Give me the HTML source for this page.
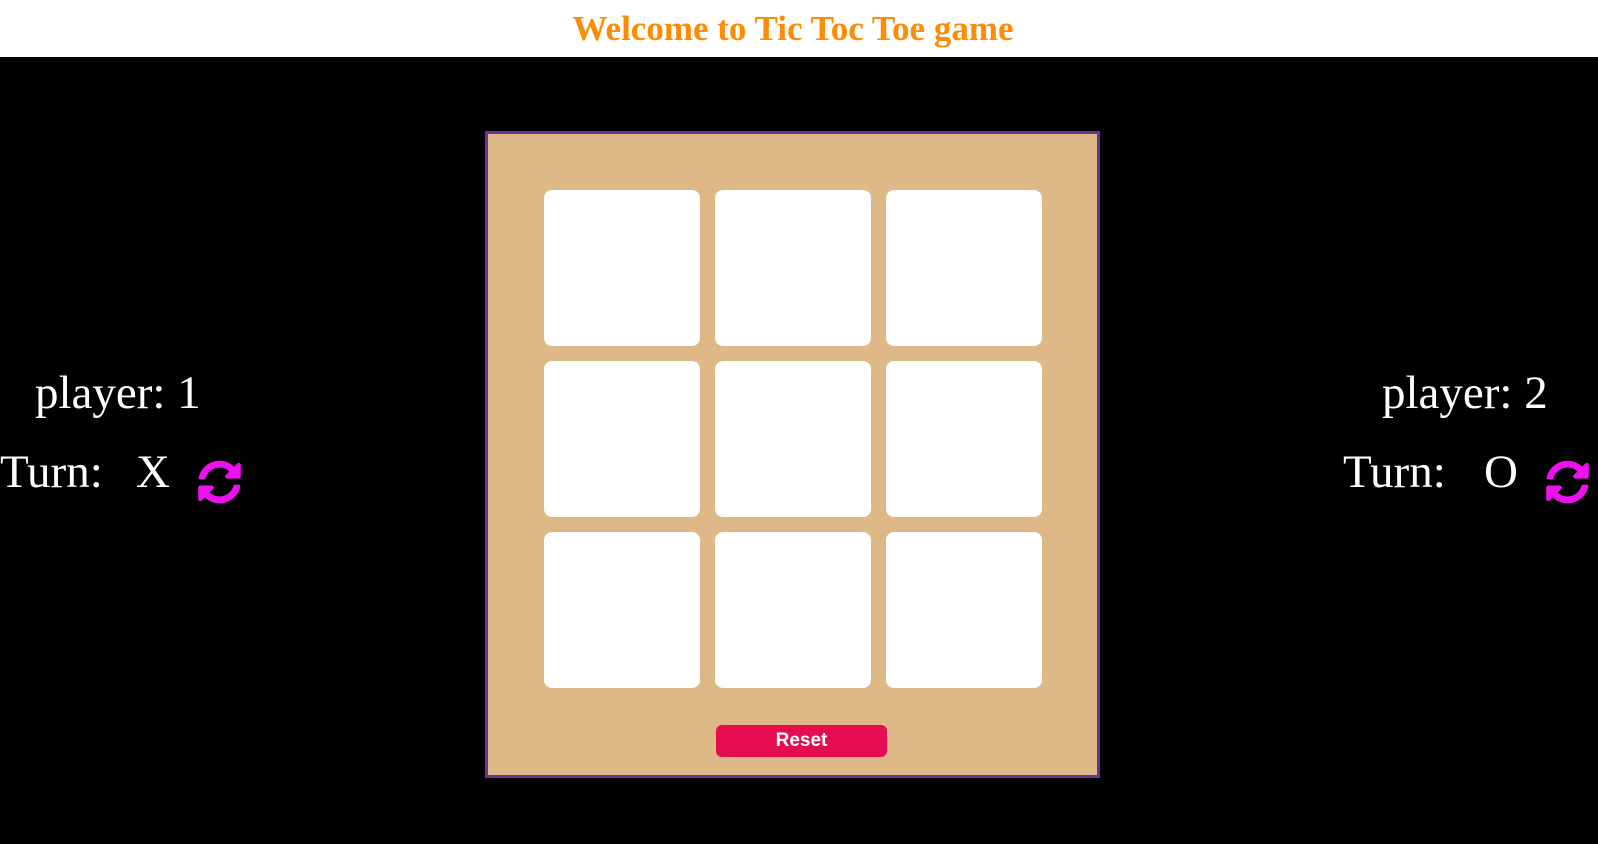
<!DOCTYPE html>
<html><head><meta charset="utf-8"><style>
*{margin:0;padding:0;box-sizing:border-box}
body{width:1598px;height:844px;background:#000;position:relative;overflow:hidden;font-family:"Liberation Serif",serif;color:#fff}
.hdr{position:absolute;left:0;top:0;width:1598px;height:57px;background:#fff;text-align:center;line-height:58px;font-size:35px;font-weight:bold;color:#ff8c00;padding-right:12px}
.box{position:absolute;left:485px;top:131px;width:615px;height:647px;background:#deb887;border:3px solid #663399}
.cell{position:absolute;width:156px;height:156px;background:#fff;border-radius:8px}
.btn{position:absolute;left:716px;top:725px;width:171px;height:32px;background:#e60c52;border-radius:6px;color:#fff;font-family:"Liberation Sans",sans-serif;font-weight:bold;font-size:19px;text-align:center;line-height:32px}
.t{position:absolute;font-size:47px;line-height:46px;white-space:nowrap}
svg{position:absolute}
</style></head><body>
<div class="hdr">Welcome to Tic Toc Toe game</div>
<div class="box"></div>
<div class="cell" style="left:544px;top:190px"></div>
<div class="cell" style="left:715px;top:190px"></div>
<div class="cell" style="left:886px;top:190px"></div>
<div class="cell" style="left:544px;top:361px"></div>
<div class="cell" style="left:715px;top:361px"></div>
<div class="cell" style="left:886px;top:361px"></div>
<div class="cell" style="left:544px;top:532px"></div>
<div class="cell" style="left:715px;top:532px"></div>
<div class="cell" style="left:886px;top:532px"></div>
<div class="btn">Reset</div>

<div class="t" style="left:35px;top:370px">player: 1</div>
<div class="t" style="left:0px;top:449px">Turn:</div>
<div class="t" style="left:136px;top:449px">X</div>
<svg style="left:197px;top:460px" width="45" height="44" viewBox="0 0 512 512"><path fill="#ee11f0" d="M370.72 133.28C339.458 104.008 298.888 87.962 255.848 88c-77.458.068-144.328 53.178-162.791 126.850-1.344 5.363-6.122 9.150-11.651 9.150H24.103c-7.498 0-13.194-6.807-11.807-14.176C33.933 94.924 134.813 8 256 8c66.448 0 126.791 26.136 171.315 68.685L463.030 40.970C478.149 25.851 504 36.559 504 57.941V192c0 13.255-10.745 24-24 24H345.941c-21.382 0-32.090-25.851-16.971-40.971l41.750-41.749zM32 296h134.059c21.382 0 32.090 25.851 16.971 40.971l-41.750 41.750c31.262 29.273 71.835 45.319 114.876 45.280 77.418-.070 144.315-53.144 162.787-126.849 1.344-5.363 6.122-9.150 11.651-9.150h57.304c7.498 0 13.194 6.807 11.807 14.176C478.067 417.076 377.187 504 256 504c-66.448 0-126.791-26.136-171.315-68.685L48.970 471.030C33.851 486.149 8 475.441 8 454.059V320c0-13.255 10.745-24 24-24z"/></svg>

<div class="t" style="left:1382px;top:370px">player: 2</div>
<div class="t" style="left:1343px;top:449px">Turn:</div>
<div class="t" style="left:1484px;top:449px">O</div>
<svg style="left:1545px;top:460px" width="45" height="44" viewBox="0 0 512 512"><path fill="#ee11f0" d="M370.72 133.28C339.458 104.008 298.888 87.962 255.848 88c-77.458.068-144.328 53.178-162.791 126.850-1.344 5.363-6.122 9.150-11.651 9.150H24.103c-7.498 0-13.194-6.807-11.807-14.176C33.933 94.924 134.813 8 256 8c66.448 0 126.791 26.136 171.315 68.685L463.030 40.970C478.149 25.851 504 36.559 504 57.941V192c0 13.255-10.745 24-24 24H345.941c-21.382 0-32.090-25.851-16.971-40.971l41.750-41.749zM32 296h134.059c21.382 0 32.090 25.851 16.971 40.971l-41.750 41.750c31.262 29.273 71.835 45.319 114.876 45.280 77.418-.070 144.315-53.144 162.787-126.849 1.344-5.363 6.122-9.150 11.651-9.150h57.304c7.498 0 13.194 6.807 11.807 14.176C478.067 417.076 377.187 504 256 504c-66.448 0-126.791-26.136-171.315-68.685L48.970 471.030C33.851 486.149 8 475.441 8 454.059V320c0-13.255 10.745-24 24-24z"/></svg>
</body></html>
